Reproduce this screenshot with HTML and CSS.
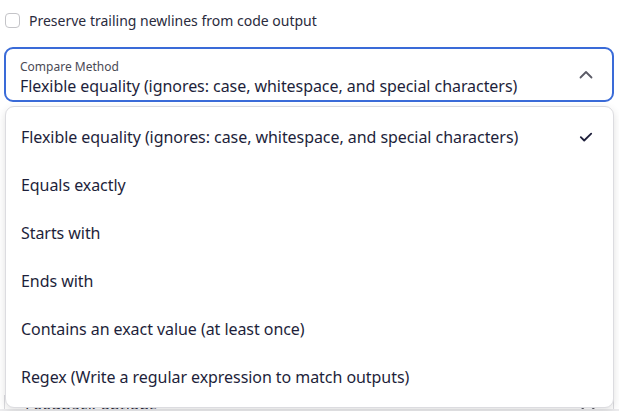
FILE: index.html
```html
<!DOCTYPE html>
<html>
<head>
<meta charset="utf-8">
<link rel="stylesheet" href="styles.css">
</head>
<body>
<div class="page">
  <label class="check-row">
    <span class="checkbox"></span>
    <span class="check-label">Preserve trailing newlines from code output</span>
  </label>

  <div class="field-wrap">
    <div class="select is-open">
      <div class="select-text">
        <span class="select-label">Compare Method</span>
        <span class="select-value">Flexible equality (ignores: case, whitespace, and special characters)</span>
      </div>
      <svg class="chevron" width="16" height="16" viewBox="0 0 16 16"><path d="M2.5 10.5 L8 5 L13.5 10.5" fill="none" stroke="#5b5b66" stroke-width="1.8" stroke-linecap="round" stroke-linejoin="round"/></svg>
    </div>

    <ul class="menu">
      <li class="menu-item selected"><span>Flexible equality (ignores: case, whitespace, and special characters)</span>
        <svg class="check" width="14" height="14" viewBox="0 0 14 14"><path d="M1.8 7.2 L5.2 10.5 L12.2 3.6" fill="none" stroke="#1e1f3b" stroke-width="1.8" stroke-linecap="round" stroke-linejoin="round"/></svg>
      </li>
      <li class="menu-item"><span>Equals exactly</span></li>
      <li class="menu-item"><span>Starts with</span></li>
      <li class="menu-item"><span>Ends with</span></li>
      <li class="menu-item"><span>Contains an exact value (at least once)</span></li>
      <li class="menu-item"><span>Regex (Write a regular expression to match outputs)</span></li>
    </ul>
  </div>

  <div class="section-head">
    <span>Feedback options</span>
    <svg class="chevron-down" width="16" height="16" viewBox="0 0 16 16"><path d="M2.5 5.5 L8 11 L13.5 5.5" fill="none" stroke="#5b5b66" stroke-width="1.8" stroke-linecap="round" stroke-linejoin="round"/></svg>
  </div>
</div>
<div class="bottom-strip"></div>
</body>
</html>
```

FILE: styles.css
```css
* { box-sizing: border-box; }
html, body { margin: 0; padding: 0; background: #ffffff; }
body {
  font-family: "Noto Sans", "Open Sans", sans-serif;
  color: #1e1f3b;
  overflow: hidden;
  width: 619px;
  height: 411px;
}
.page {
  padding: 9px 5px 0 4px;
}
.check-row {
  display: flex;
  align-items: center;
  gap: 9px;
  padding-left: 1px;
  height: 22px;
  font-size: 14px;
  color: #2a2b3d;
}
.checkbox {
  width: 15px;
  height: 15px;
  border: 1px solid #c4c4c8;
  border-radius: 4px;
  background: #fff;
  flex: none;
}
.field-wrap {
  position: relative;
  margin-top: 16px;
}
.select {
  display: flex;
  align-items: center;
  justify-content: space-between;
  height: 55px;
  border: 2px solid #3a6bd8;
  border-radius: 9px;
  padding: 7px 18px 0 14px;
}
.select-text {
  display: flex;
  flex-direction: column;
}
.select-label {
  font-size: 12px;
  line-height: 16px;
  color: #4a4a55;
}
.select-value {
  font-size: 16px;
  line-height: 22px;
  letter-spacing: -0.06px;
  color: #1e1f3b;
}
.chevron { margin-top: -6px; }
.menu {
  position: absolute;
  left: 1px;
  right: 0;
  top: 59px;
  margin: 0;
  padding: 6px 0;
  list-style: none;
  background: #fff;
  border: 1px solid #dcdce0;
  border-radius: 9px;
  box-shadow: 0 3px 8px rgba(0,0,0,0.12);
  z-index: 2;
}
.menu-item {
  display: flex;
  align-items: center;
  justify-content: space-between;
  height: 48px;
  padding: 0 20px 0 15px;
  font-size: 16px;
  letter-spacing: -0.06px;
  color: #1e1f3b;
}
.section-head {
  display: flex;
  justify-content: space-between;
  align-items: flex-start;
  height: 14px;
  overflow: hidden;
  margin-top: 293px;
  padding: 4px 17px 0 20px;
  font-size: 16px;
  line-height: 22px;
  color: #2a2b3d;
  border-left: 1px solid #dcdce0;
  border-right: 1px solid #dcdce0;
}
.chevron-down { margin-top: 4px; flex: none; }
.bottom-strip {
  height: 10px;
  background: #ececee;
}
```
